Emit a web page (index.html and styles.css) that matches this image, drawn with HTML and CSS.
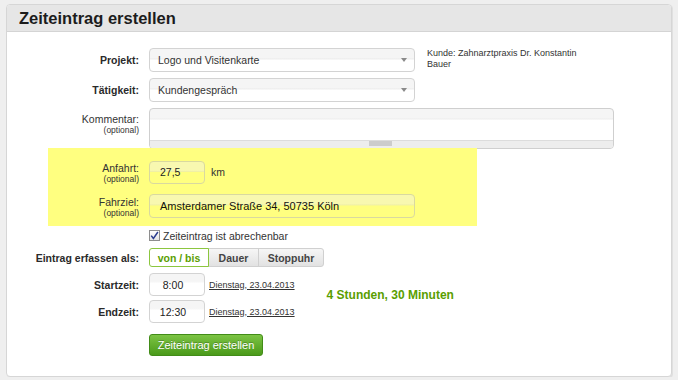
FILE: index.html
```html
<!DOCTYPE html>
<html>
<head>
    <meta charset="utf-8">
    <link rel="stylesheet" href="styles.css">
    <title>Zeiteintrag erstellen</title>
</head>
<body>
<div class="panel">
    <h1 class="panel__title">Zeiteintrag erstellen</h1>
    <div class="entry-form">
        <div class="row">
            <span class="row__label strong">Projekt:</span>
            <div class="select"><span>Logo und Visitenkarte</span><i class="select__arrow"></i></div>
            <p class="customer">Kunde: Zahnarztpraxis Dr. Konstantin<br>Bauer</p>
        </div>
        <div class="row">
            <span class="row__label strong">Tätigkeit:</span>
            <div class="select"><span>Kundengespräch</span><i class="select__arrow"></i></div>
        </div>
        <div class="row">
            <span class="row__label row__label--top">Kommentar:<small>(optional)</small></span>
            <div class="textarea">
                <div class="textarea__scroll"><span class="textarea__thumb"></span></div>
            </div>
        </div>
        <div class="highlight">
            <div class="row">
                <span class="row__label">Anfahrt:<small>(optional)</small></span>
                <div class="field field--short">27,5</div>
                <span class="unit">km</span>
            </div>
            <div class="row">
                <span class="row__label">Fahrziel:<small>(optional)</small></span>
                <div class="field field--wide">Amsterdamer Straße 34, 50735 Köln</div>
            </div>
        </div>
        <div class="row row--check">
            <span class="checkbox">
                <svg width="9" height="9" viewBox="0 0 9 9"><path d="M1.2 4.6 L3.4 7.4 L7.9 1" fill="none" stroke="#2b3d8f" stroke-width="1.5"/></svg>
            </span>
            <span class="check-text">Zeiteintrag ist abrechenbar</span>
        </div>
        <div class="row">
            <span class="row__label strong">Eintrag erfassen als:</span>
            <div class="toggle">
                <span class="toggle__item toggle__item--active">von / bis</span>
                <span class="toggle__item toggle__item--mid">Dauer</span>
                <span class="toggle__item toggle__item--last">Stoppuhr</span>
            </div>
        </div>
        <div class="times">
            <div class="times__rows">
                <div class="row">
                    <span class="row__label strong">Startzeit:</span>
                    <div class="field field--short field--time">8:00</div>
                    <a class="date-link" href="#">Dienstag, 23.04.2013</a>
                </div>
                <div class="row">
                    <span class="row__label strong">Endzeit:</span>
                    <div class="field field--short field--time">12:30</div>
                    <a class="date-link" href="#">Dienstag, 23.04.2013</a>
                </div>
            </div>
            <span class="duration">4 Stunden, 30 Minuten</span>
        </div>
        <div class="row row--submit">
            <button class="btn-submit">Zeiteintrag erstellen</button>
        </div>
    </div>
</div>
</body>
</html>
```

FILE: styles.css
```css
*,
*::before,
*::after {
    box-sizing: border-box;
}

body {
    margin: 0;
    background: #efefef;
    font-family: 'Liberation Sans', Arial, sans-serif;
    font-size: 10.5px;
    color: #333333;
}

.panel {
    margin: 4px 6px 0;
    background: #ffffff;
    border: 1px solid #d6d6d6;
    border-radius: 4px;
    box-shadow: 1px 1px 0 #e0e0e0;
    padding-bottom: 20px;
}

.panel__title {
    margin: 0;
    height: 27px;
    line-height: 26px;
    padding-left: 12px;
    background: #e6e6e6;
    border-bottom: 1px solid #d4d4d4;
    border-radius: 3px 3px 0 0;
    font-size: 16.5px;
    font-weight: bold;
    color: #1c1c1c;
}

.entry-form {
    padding-top: 16px;
    display: flex;
    flex-direction: column;
    gap: 6px;
}

.row {
    display: flex;
    align-items: center;
}

.row__label {
    width: 132px;
    margin-right: 10px;
    flex-shrink: 0;
    text-align: right;
    color: #333333;
}

.row__label small {
    display: block;
    font-size: 8.5px;
    line-height: 10px;
}

.row__label--top {
    align-self: flex-start;
    padding-top: 5px;
}

.strong {
    font-weight: bold;
    color: #2a2a2a;
}

.select,
.field,
.textarea {
    border: 1px solid #d3d3d3;
    border-radius: 4px;
    background: linear-gradient(to bottom, #f5f5f5 0, #f5f5f5 40%, #ececec 45%, #ffffff 50%);
}

.select {
    width: 266px;
    height: 24px;
    padding: 0 7px 0 8px;
    display: flex;
    align-items: center;
    color: #333333;
}

.select__arrow {
    margin-left: auto;
    width: 0;
    height: 0;
    border-left: 3px solid transparent;
    border-right: 3px solid transparent;
    border-top: 4px solid #8a8a8a;
}

.customer {
    align-self: flex-start;
    margin: 0 0 0 12px;
    font-size: 9px;
    line-height: 11px;
    color: #333333;
}

.textarea {
    width: 465px;
    height: 41px;
    display: flex;
    flex-direction: column;
    overflow: hidden;
    border-color: #cfcfcf;
    background: linear-gradient(to bottom, #f5f5f5 0, #f5f5f5 9px, #ececec 10px, #ffffff 11px);
}

.textarea__scroll {
    margin-top: auto;
    height: 8px;
    background: #ededed;
    border-top: 1px solid #dcdcdc;
    display: flex;
}

.textarea__thumb {
    margin-left: 219px;
    width: 23px;
    height: 5px;
    background: #cccccc;
}

.highlight {
    margin: -7px 0 0 41px;
    width: 429px;
    padding: 12px 0 8px;
    background: #ffff80;
    display: flex;
    flex-direction: column;
    gap: 10px;
}

.highlight .row__label {
    width: 91px;
    line-height: 11px;
    padding-top: 3px;
}

.field {
    height: 23px;
    padding: 0 10px;
    display: flex;
    align-items: center;
    color: #222222;
}

.highlight .field {
    border-color: #d9d9a0;
    background: linear-gradient(to bottom, #f8f8b0 0, #f8f8b0 40%, #efefa8 45%, #ffff80 50%);
}

.field--short {
    width: 56px;
}

.field--wide {
    width: 266px;
    height: 24px;
    font-size: 11px;
    color: #111111;
}

.field--time {
    justify-content: center;
    padding: 0 8px 0 0;
    background: linear-gradient(to bottom, #f5f5f5 0, #f5f5f5 35%, #ffffff 45%);
}

.unit {
    margin-left: 6px;
}

.row--check {
    margin: -3px 0 0 142px;
    height: 13px;
}

.checkbox {
    width: 11px;
    height: 11px;
    border: 1px solid #8e8e8e;
    background: linear-gradient(to bottom, #ffffff, #e4e4e4);
    display: flex;
    align-items: center;
    justify-content: center;
}

.check-text {
    margin-left: 3px;
}

.toggle {
    display: flex;
}

.toggle__item {
    height: 19px;
    display: flex;
    align-items: center;
    justify-content: center;
    border: 1px solid #d0d0d0;
    background: linear-gradient(to bottom, #f6f6f6, #e2e2e2);
    font-weight: bold;
    color: #444444;
}

.toggle__item--active {
    width: 60px;
    border-color: #8cc63f;
    border-radius: 3px 0 0 3px;
    background: #ffffff;
    color: #5a9e00;
    position: relative;
    z-index: 1;
}

.toggle__item--mid {
    width: 51px;
    margin-left: -1px;
}

.toggle__item--last {
    width: 66px;
    margin-left: -1px;
    border-radius: 0 3px 3px 0;
}

.times {
    display: flex;
    align-items: center;
}

.times__rows {
    display: flex;
    flex-direction: column;
    gap: 4px;
}

.date-link {
    margin-left: 4px;
    font-size: 9px;
    color: #333333;
    text-decoration: underline;
}

.duration {
    margin: -6px 0 0 32px;
    font-size: 12px;
    font-weight: bold;
    color: #5a9e00;
}

.row--submit {
    margin: 5px 0 0 142px;
}

.btn-submit {
    width: 114px;
    height: 22px;
    padding: 0;
    border: 1px solid #428c18;
    border-radius: 3px;
    background: linear-gradient(to bottom, #7cc444, #4a9a1a);
    font-family: 'Liberation Sans', Arial, sans-serif;
    font-size: 11px;
    color: #ffffff;
    text-shadow: 0 -1px 0 rgba(0, 0, 0, 0.25);
    cursor: pointer;
}
```
